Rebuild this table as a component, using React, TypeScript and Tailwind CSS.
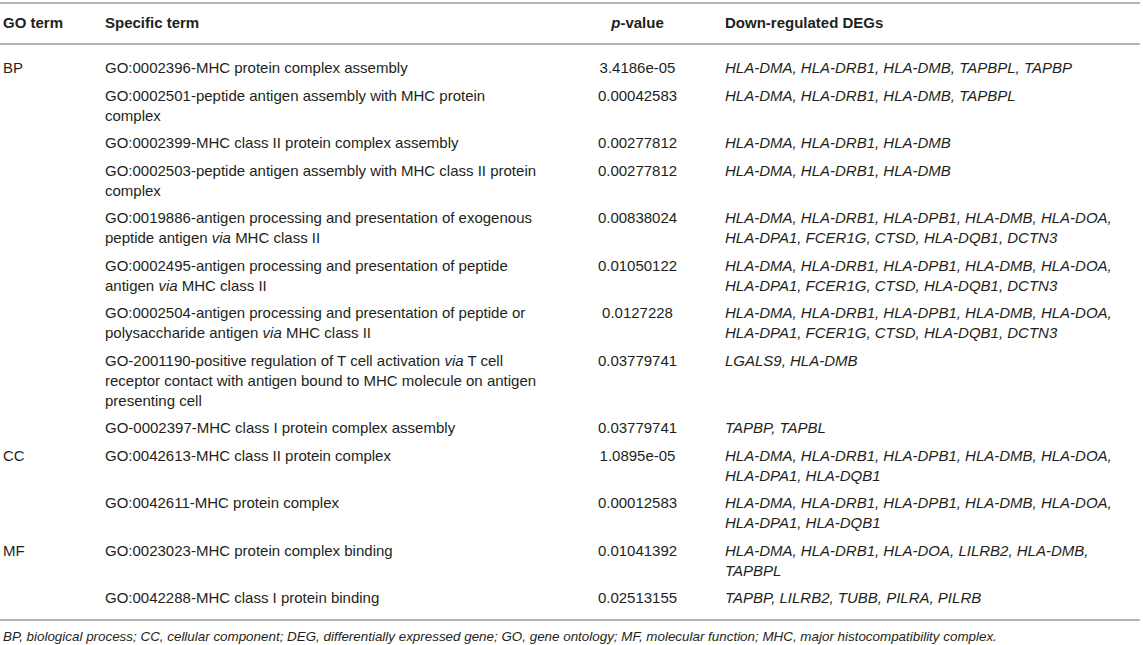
import { Fragment } from "react";

interface Row {
  group?: string;
  term: string[];
  p: string;
  degs: string[];
}

const ALL_DEGS = [
  "HLA-DMA, HLA-DRB1, HLA-DPB1, HLA-DMB, HLA-DOA,",
  "HLA-DPA1, FCER1G, CTSD, HLA-DQB1, DCTN3",
];

const CC_DEGS = [
  "HLA-DMA, HLA-DRB1, HLA-DPB1, HLA-DMB, HLA-DOA,",
  "HLA-DPA1, HLA-DQB1",
];

const rows: Row[] = [
  {
    group: "BP",
    term: ["GO:0002396-MHC protein complex assembly"],
    p: "3.4186e-05",
    degs: ["HLA-DMA, HLA-DRB1, HLA-DMB, TAPBPL, TAPBP"],
  },
  {
    term: ["GO:0002501-peptide antigen assembly with MHC protein", "complex"],
    p: "0.00042583",
    degs: ["HLA-DMA, HLA-DRB1, HLA-DMB, TAPBPL"],
  },
  {
    term: ["GO:0002399-MHC class II protein complex assembly"],
    p: "0.00277812",
    degs: ["HLA-DMA, HLA-DRB1, HLA-DMB"],
  },
  {
    term: ["GO:0002503-peptide antigen assembly with MHC class II protein", "complex"],
    p: "0.00277812",
    degs: ["HLA-DMA, HLA-DRB1, HLA-DMB"],
  },
  {
    term: [
      "GO:0019886-antigen processing and presentation of exogenous",
      "peptide antigen via MHC class II",
    ],
    p: "0.00838024",
    degs: ALL_DEGS,
  },
  {
    term: [
      "GO:0002495-antigen processing and presentation of peptide",
      "antigen via MHC class II",
    ],
    p: "0.01050122",
    degs: ALL_DEGS,
  },
  {
    term: [
      "GO:0002504-antigen processing and presentation of peptide or",
      "polysaccharide antigen via MHC class II",
    ],
    p: "0.0127228",
    degs: ALL_DEGS,
  },
  {
    term: [
      "GO-2001190-positive regulation of T cell activation via T cell",
      "receptor contact with antigen bound to MHC molecule on antigen",
      "presenting cell",
    ],
    p: "0.03779741",
    degs: ["LGALS9, HLA-DMB"],
  },
  {
    term: ["GO-0002397-MHC class I protein complex assembly"],
    p: "0.03779741",
    degs: ["TAPBP, TAPBL"],
  },
  {
    group: "CC",
    term: ["GO:0042613-MHC class II protein complex"],
    p: "1.0895e-05",
    degs: CC_DEGS,
  },
  {
    term: ["GO:0042611-MHC protein complex"],
    p: "0.00012583",
    degs: CC_DEGS,
  },
  {
    group: "MF",
    term: ["GO:0023023-MHC protein complex binding"],
    p: "0.01041392",
    degs: ["HLA-DMA, HLA-DRB1, HLA-DOA, LILRB2, HLA-DMB,", "TAPBPL"],
  },
  {
    term: ["GO:0042288-MHC class I protein binding"],
    p: "0.02513155",
    degs: ["TAPBP, LILRB2, TUBB, PILRA, PILRB"],
  },
];

/** "via" sale en cursiva dentro del término */
function TermLine({ text }: Readonly<{ text: string }>) {
  const parts = text.split(" via ");
  return (
    <div>
      {parts.map((part, i) => (
        <Fragment key={`part-${i}`}>
          {i > 0 && (
            <>
              {" "}
              <i>via</i>{" "}
            </>
          )}
          {part}
        </Fragment>
      ))}
    </div>
  );
}

export default function App() {
  return (
    <div className="bg-white text-[#231f20] font-['Liberation_Sans',Arial,sans-serif] text-[15px] leading-[20px] pt-[2px]">
      <table className="w-[1140px] border-collapse table-fixed">
        <colgroup>
          <col className="w-[105px]" />
          <col className="w-[455px]" />
          <col className="w-[155px]" />
          <col />
        </colgroup>
        <thead>
          <tr className="border-y-2 border-[#b5b5b5] font-bold text-left">
            <th className="pl-[3px] pt-[9px] pb-[10px] font-bold">GO term</th>
            <th className="pt-[9px] pb-[10px] font-bold">Specific term</th>
            <th className="pt-[9px] pb-[10px] font-bold text-center">
              <i>p</i>-value
            </th>
            <th className="pl-[10px] pt-[9px] pb-[10px] font-bold">Down-regulated DEGs</th>
          </tr>
        </thead>
        <tbody className="border-b-2 border-[#b5b5b5]">
          {rows.map((row, i) => {
            const first = i === 0;
            const last = i === rows.length - 1;
            const pad = first
              ? "pt-[13px] pb-[3.75px]"
              : last
                ? "pt-[3.75px] pb-[11px]"
                : "py-[3.75px]";
            return (
              <tr key={`row-${i}`} className="align-top">
                <td className={`pl-[3px] ${pad}`}>{row.group}</td>
                <td className={`whitespace-nowrap ${pad}`}>
                  {row.term.map((line, j) => (
                    <TermLine key={`t-${j}`} text={line} />
                  ))}
                </td>
                <td className={`text-center ${pad}`}>{row.p}</td>
                <td className={`pl-[10px] italic whitespace-nowrap ${pad}`}>
                  {row.degs.map((line, j) => (
                    <div key={`d-${j}`}>{line}</div>
                  ))}
                </td>
              </tr>
            );
          })}
        </tbody>
      </table>
      <p className="pl-[3px] pt-[6px] italic text-[13.4px] leading-[20px]">
        BP, biological process; CC, cellular component; DEG, differentially expressed gene; GO,
        gene ontology; MF, molecular function; MHC, major histocompatibility complex.
      </p>
    </div>
  );
}
